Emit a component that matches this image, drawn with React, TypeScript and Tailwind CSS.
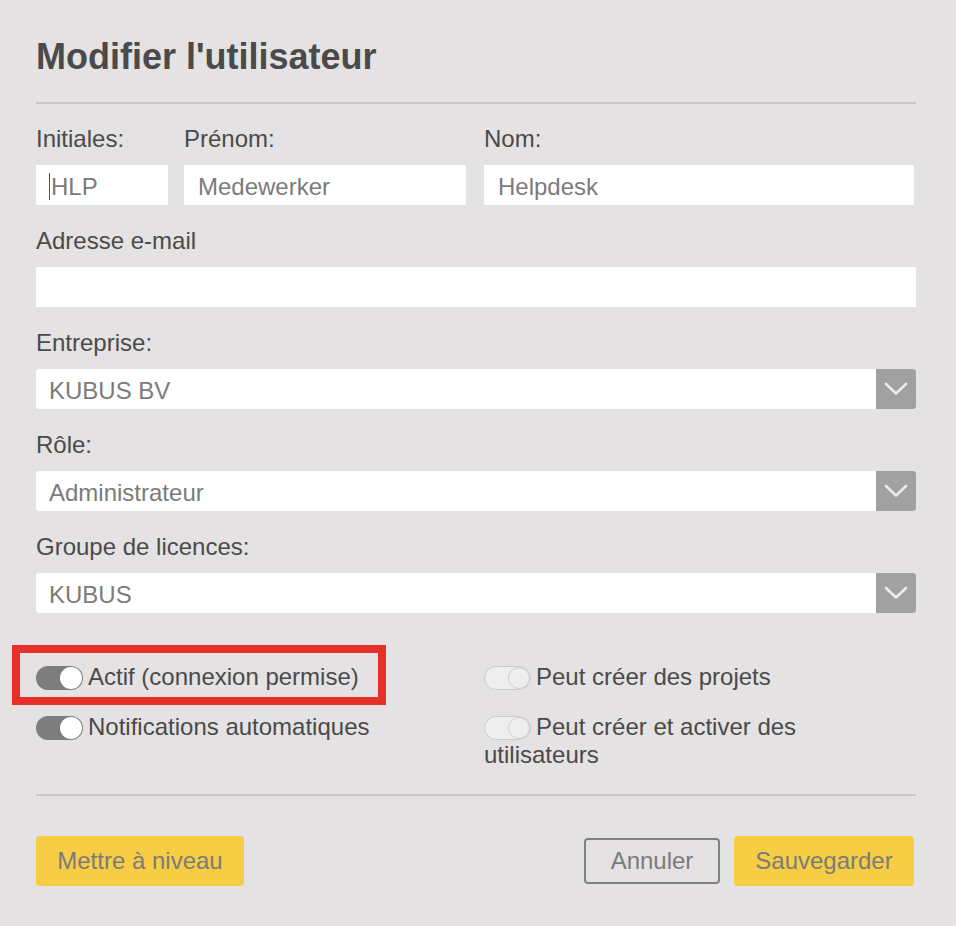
import React from 'react';

const FONT = 'font-["Liberation_Sans",Arial,Helvetica,sans-serif]';

const Label: React.FC<{ text: string }> = ({ text }) => (
  <div className="text-[24px] leading-[28px] text-[#4a4a4a] mb-3">{text}</div>
);

const TextBox: React.FC<{ value?: string; caret?: boolean }> = ({ value, caret }) => (
  <div className={`h-[40px] bg-white flex items-center ${caret ? 'pl-[13px]' : 'pl-[14px]'} pt-[3px] text-[24px] leading-[28px] text-[#7b7b7b] whitespace-nowrap overflow-hidden`}>
    {caret && <span className="inline-block w-px h-[27px] bg-[#555] mr-px" />}
    {value}
  </div>
);

const Select: React.FC<{ value: string }> = ({ value }) => (
  <div className="h-[40px] bg-white rounded-[3px] flex overflow-hidden">
    <div className="flex-1 flex items-center pl-[13px] pt-[3px] text-[24px] leading-[28px] text-[#7b7b7b]">{value}</div>
    <div className="w-[40px] bg-[#a1a1a1] flex items-center justify-center">
      <svg width="24" height="14" viewBox="0 0 24 14" fill="none">
        <polyline points="2,2 12,11.5 22,2" stroke="#ececec" strokeWidth="2.6" strokeLinecap="round" strokeLinejoin="round" />
      </svg>
    </div>
  </div>
);

const Toggle: React.FC<{ on: boolean }> = ({ on }) =>
  on ? (
    <span className="inline-flex items-center justify-end w-[47px] h-[24px] rounded-full bg-[#7d7d7d] align-[-4px] mr-[5px]">
      <span className="w-[22px] h-[22px] rounded-full bg-white mr-px" />
    </span>
  ) : (
    <span className="inline-flex items-center justify-end w-[47px] h-[24px] rounded-full bg-[#efeeef] border border-[#cdcccd] align-[-4px] mr-[5px]">
      <span className="w-[22px] h-[22px] rounded-full bg-[#efeeef] border border-[#cdcccd]" />
    </span>
  );

export default function App() {
  return (
    <div className={`min-h-screen bg-[#e4e2e3] ${FONT}`}>
      <div className="pl-9 pr-10 pt-[36px] pb-10">
        <h1 className="text-[36px] leading-[42px] font-bold text-[#4a4a4a]">Modifier l'utilisateur</h1>
        <div className="mt-[24px] h-[2px] bg-[#cac8c9]" />

        {/* Name row */}
        <div className="mt-[21px] flex">
          <div className="w-[132px]">
            <Label text="Initiales:" />
            <TextBox value="HLP" caret />
          </div>
          <div className="w-[282px] ml-4">
            <Label text="Prénom:" />
            <TextBox value="Medewerker" />
          </div>
          <div className="flex-1 ml-[18px] mr-[2px]">
            <Label text="Nom:" />
            <TextBox value="Helpdesk" />
          </div>
        </div>

        <div className="mt-[22px]">
          <Label text="Adresse e-mail" />
          <TextBox />
        </div>

        <div className="mt-[22px]">
          <Label text="Entreprise:" />
          <Select value="KUBUS BV" />
        </div>

        <div className="mt-[22px]">
          <Label text="Rôle:" />
          <Select value="Administrateur" />
        </div>

        <div className="mt-[22px]">
          <Label text="Groupe de licences:" />
          <Select value="KUBUS" />
        </div>

        {/* Toggles */}
        <div className="mt-[50px] grid grid-cols-[448px_1fr] text-[24px] leading-[28px] text-[#4a4a4a]">
          <div className="flex flex-col gap-[22px]">
            <div className="relative">
              <Toggle on />Actif (connexion permise)
              <div className="absolute left-[-24px] top-[-18px] w-[374px] h-[60px] border-[8px] border-[#e8302a]" />
            </div>
            <div>
              <Toggle on />Notifications automatiques
            </div>
          </div>
          <div className="flex flex-col gap-[22px]">
            <div>
              <Toggle on={false} />Peut créer des projets
            </div>
            <div>
              <Toggle on={false} />Peut créer et activer des utilisateurs
            </div>
          </div>
        </div>

        <div className="mt-[25px] h-[2px] bg-[#cac8c9]" />

        {/* Actions */}
        <div className="mt-10 flex justify-between items-center text-[24px] text-[#7b7b7b]">
          <button className="w-[208px] h-[50px] bg-[#f6cd45] rounded-[4px]">Mettre à niveau</button>
          <div className="flex items-center gap-[14px] mr-[2px]">
            <button className="w-[136px] h-[46px] border-2 border-[#808080] rounded-[4px]">Annuler</button>
            <button className="w-[180px] h-[50px] bg-[#f6cd45] rounded-[4px]">Sauvegarder</button>
          </div>
        </div>
      </div>
    </div>
  );
}
